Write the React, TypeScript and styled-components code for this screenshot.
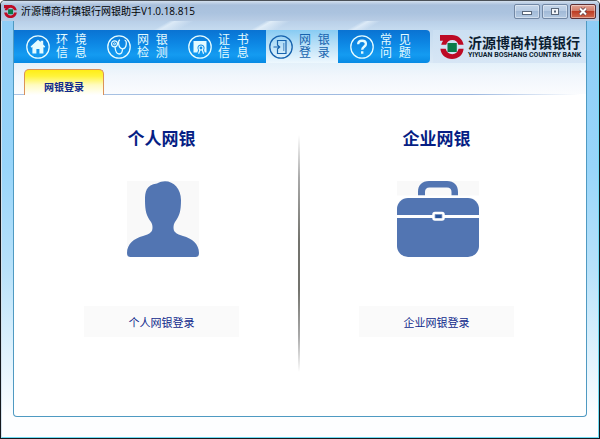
import React from "react";
import styled, { createGlobalStyle } from "styled-components";

const GlobalStyle = createGlobalStyle`
  * { box-sizing: border-box; }
  body {
    margin: 0;
    font-family: "Open Sans", "Noto Sans CJK SC", sans-serif;
    font-size: 11px;
    color: #10298c;
  }
  button { font: inherit; color: inherit; padding: 0; cursor: pointer; }
  svg { display: block; }
`;

const Window = styled.div`
  display: flex;
  flex-direction: column;
  min-height: 100vh;
  border: 1px solid #15191e;
  border-top-color: #4b5158;
  border-radius: 5px 5px 0 0;
  overflow: hidden;
`;

const TitleBar = styled.header`
  display: flex;
  align-items: center;
  height: 20px;
  padding: 0 3px;
  gap: 4px;
  background: linear-gradient(#d3e0ee 0, #a9c0dc 4px, #abc3df 12px, #b9cde5 100%);
`;

const AppTitle = styled.h1`
  flex: 1;
  margin: 0;
  font-size: 10px;
  line-height: 16px;
  font-weight: 400;
  color: #000;
  white-space: nowrap;
`;

const WindowControls = styled.div`
  display: flex;
  gap: 2px;
`;

const ControlButton = styled.button<{ $danger?: boolean }>`
  display: grid;
  place-items: center;
  width: 26px;
  height: 15px;
  border: 1px solid ${(p) => (p.$danger ? "#5b2f35" : "#7288a5")};
  border-radius: 2px;
  box-shadow: inset 0 0 0 1px rgba(255, 255, 255, 0.4);
  background: ${(p) =>
    p.$danger
      ? "linear-gradient(#e0a294 0, #d27c69 45%, #bd3d25 50%, #d06a50 100%)"
      : "linear-gradient(#c4d5e9 0, #b7cbe3 45%, #a2bad7 50%, #b4cae3 100%)"};
`;

const Frame = styled.div`
  flex: 1;
  display: flex;
  padding: 0 11px 20px;
  border: solid #6fdcf4;
  border-width: 0 1px 1px;
  border-left-color: #d5e3ee;
  background: linear-gradient(#8fcdf6 0, #98d5fa 35%, #b9e2fa 60%, #fdfeff 95%);
`;

const Panel = styled.main`
  flex: 1;
  display: flex;
  flex-direction: column;
  border: solid #4f9ac2;
  border-width: 0 1px 1px;
  border-radius: 0 0 4px 4px;
  background: #fff;
  overflow: hidden;
`;

const Banner = styled.div`
  display: flex;
  gap: 3px;
  padding-top: 9px;
  background:
    linear-gradient(150deg, transparent 24%, #dceaf7 25%, transparent 28%, transparent 39%, #e0edf8 40%, transparent 43%, transparent 54%, #dceaf7 55%, transparent 57%),
    linear-gradient(#b8cfe8 0, #c4daef 8px, #dbe9f6 100%);
`;

const NavBar = styled.nav`
  display: flex;
  gap: 9px;
  padding: 0 11px 0 9px;
  border-radius: 0 4px 4px 0;
  background: linear-gradient(#0a73d2 0, #0c84e2 35%, #149bf1 75%, #078ae4 100%);
`;

const NavButton = styled.button<{ $active?: boolean }>`
  display: flex;
  align-items: center;
  gap: 6px;
  width: 72px;
  height: 33px;
  padding: 0 3px;
  border: 0;
  font-family: "Liberation Sans", "Noto Sans CJK SC", sans-serif;
  font-size: 12px;
  line-height: 13px;
  white-space: pre;
  text-align: left;
  color: ${(p) => (p.$active ? "#1763ae" : "#e4fbff")};
  background: ${(p) => (p.$active ? "linear-gradient(#87cbf3 0, #b5def7 40%, #eef8fe 100%)" : "none")};
`;

const NavLabel = styled.span`
  display: flex;
  flex-direction: column;
`;

const Brand = styled.div`
  flex: 1;
  display: flex;
  align-items: center;
  gap: 4px;
  padding-left: 7px;
  background: linear-gradient(#cbdff2, #d7e6f5);
`;

const BrandText = styled.div`
  color: #0b1d30;
  white-space: nowrap;
`;

const BrandName = styled.div`
  font-size: 14px;
  line-height: 16px;
  font-weight: 700;
`;

const BrandLatin = styled.div`
  font: 700 7px/8px Roboto, sans-serif;
`;

const TabStrip = styled.div`
  display: flex;
  padding: 6px 0 0 10px;
  background: linear-gradient(90deg, #aac3e3 0, #9bb7df 80%, #fff 99%) bottom / 100% 1px no-repeat,
    linear-gradient(#e4f1fa 0, #f1f6fc 40%, #fbfcfe 100%);
`;

const Tab = styled.button`
  width: 80px;
  height: 26px;
  border: 1px solid #db9159;
  border-bottom: 0;
  border-radius: 5px 5px 0 0;
  padding-top: 9px;
  font-size: 10px;
  line-height: 16px;
  font-weight: 700;
  color: #10298c;
  background: linear-gradient(#ffed16 0, #fff43c 25%, #fffbc0 60%, #fff 100%);
`;

const Choices = styled.div`
  flex: 1;
  display: grid;
  grid-template-columns: 1fr 2px 1fr;
  padding: 32px 13px 44px 11px;
`;

const Choice = styled.section`
  display: flex;
  flex-direction: column;
  align-items: center;
`;

const ChoiceTitle = styled.h2`
  margin: 0;
  font-size: 17px;
  line-height: 24px;
  font-weight: 700;
  color: #061e84;
`;

const Picture = styled.div`
  margin: 30px 0 49px 3px;
  background: #f9f9f9;
`;

const LoginButton = styled.button`
  width: 155px;
  height: 31px;
  border: 0;
  background: #fafafa;
`;

const Divider = styled.div`
  margin-top: 8px;
  background: linear-gradient(#fff 0, #aaa 18%, #73736d 45%, #73736d 65%, #aaa 85%, #fff 100%);
`;

const BankMark = ({ size }: { size: number }) => (
  <svg width={size} height={size} viewBox="0 0 24 24" aria-hidden="true">
    <path
      fill="#bd0b25"
      d="M0 0h12C18 0 22.600 4 23.600 9.800h-5.200C17.600 6.800 15.400 5 12.400 5C9.200 5 7 6.800 6.200 9.800H1.200C1.500 8.300 2.200 7 3.100 5.800H0zM0.400 13.800h5.300C6.500 17.200 9 19.200 12.300 19.200c3.300 0 5.500-2 6.300-5.400h5C23 20 18.400 24 12 24S1 20 .4 13.800z"
    />
    <path fill="#087b49" d="M7.500 8h9.300v9H7.500z" />
  </svg>
);

const Ring = ({ children }: { children: React.ReactNode }) => (
  <svg width="24" height="24" viewBox="0 0 24 24" fill="none" stroke="currentColor" aria-hidden="true">
    <circle cx="12" cy="12" r="11.200" strokeWidth="1.300" />
    {children}
  </svg>
);

const HomeIcon = () => (
  <Ring>
    <path fill="currentColor" stroke="none" d="M12 4.800l2.600 2.300V5.800h2.600v3.600l2 2.200-1 1.100-.8-.6v6.500h-4v-4.700h-3v4.700h-4v-6.500l-.8.600-1-1.100z" />
  </Ring>
);

const StethoscopeIcon = () => (
  <Ring>
    <circle cx="7.500" cy="8.800" r="3" strokeWidth="1.200" />
    <circle cx="7.500" cy="8.800" r="1" />
    <path strokeWidth="1.300" d="M8 11.800C8.300 15.500 9.500 19 12.200 19c2.500 0 3.300-2.200 3.300-5.200M13 5c-2.200.5-2 8.500 2.500 8.800C20 13.500 20.200 5.800 17.600 5" />
  </Ring>
);

const CertificateIcon = () => (
  <Ring>
    <path fill="currentColor" stroke="none" d="M5.500 6h13v11.500h-1.700l-.7-2.600c1.400-2.500-.3-5.300-3.100-5.300-3 0-4.300 2.900-2.900 5.300l-.8 2.600H5.500z" />
    <circle cx="13" cy="13" r="2" strokeWidth="1.200" />
    <path strokeWidth="1.200" d="M12 15l-1.400 3.800M14.200 15l1.400 3.800" />
  </Ring>
);

const LoginIcon = () => (
  <Ring>
    <path strokeWidth="1.200" d="M8.500 10V5.500h8.500v13H8.500v-5M4.500 12h6M8.200 9.800l2.500 2.200-2.500 2.200" />
    <path strokeWidth=".7" d="M14.800 8v8" />
  </Ring>
);

const QuestionIcon = () => (
  <Ring>
    <path strokeWidth="2.400" d="M8.200 9.200C8.300 4.500 15.900 4.700 15.900 9c0 2.800-3.700 2.700-3.700 5.800M12.200 16.300v2.500" />
  </Ring>
);

const PersonPicture = () => (
  <svg width="72" height="76" viewBox="0 0 72 76" role="img" aria-label="个人">
    <path
      fill="#5275b2"
      d="M30 2.500C42-4 54 5 54 19c0 11-1.500 16-6 22-2 3-2 8 0 10 2 2.500 5 3 8 4 9 2.500 16 8 16 17 0 2.500-1 4-3.500 4h-65C1 76 0 74.500 0 72c0-9 7-14.500 16-17 3-1 6-1.500 8-4 2-2 2-7 0-10-4.500-6-6-11-6-22C18 11 19 4 30 2.500z"
    />
  </svg>
);

const BriefcasePicture = () => (
  <svg width="82" height="76" viewBox="0 0 82 76" role="img" aria-label="企业">
    <path fill="#5275b2" d="M21 14.500V11C21 4 25 0 32 0h18c7 0 11 4 11 11v3.500h-6.500V11c0-3-1.500-4.500-4.500-4.500H32.500c-3 0-4.500 1.500-4.500 4.500v3.500z" />
    <path fill="#fff" d="M0 14.500h82V76H0z" />
    <rect y="17" width="82" height="59" rx="11" fill="#5275b2" />
    <path stroke="#fff" strokeWidth="3" d="M0 35.500h82" />
    <rect x="36.500" y="32" width="10" height="6.500" rx="1.500" fill="#5275b2" stroke="#fff" strokeWidth="2.500" />
    <path fill="#28549b" d="M39 34h5v3h-5z" />
  </svg>
);

const navItems = [
  { top: "环  境", bottom: "信  息", Icon: HomeIcon },
  { top: "网  银", bottom: "检  测", Icon: StethoscopeIcon },
  { top: "证  书", bottom: "信  息", Icon: CertificateIcon },
  { top: "网  银", bottom: "登  录", Icon: LoginIcon, active: true },
  { top: "常  见", bottom: "问  题", Icon: QuestionIcon },
];

export default function App() {
  return (
    <>
      <GlobalStyle />
      <Window lang="zh-CN">
        <TitleBar>
          <BankMark size={13} />
          <AppTitle>沂源博商村镇银行网银助手V1.0.18.815</AppTitle>
          <WindowControls>
            <ControlButton aria-label="最小化">
              <svg width="12" height="9" viewBox="0 0 12 9">
                <rect x="1.500" y="4.500" width="9" height="3" fill="#fff" stroke="#59677a" />
              </svg>
            </ControlButton>
            <ControlButton aria-label="最大化">
              <svg width="10" height="9" viewBox="0 0 10 9">
                <rect x="1.500" y="1.500" width="7" height="6" fill="#f4f7fa" stroke="#59677a" />
                <path fill="#59677a" d="M4 3.500h2v2H4z" />
              </svg>
            </ControlButton>
            <ControlButton $danger aria-label="关闭">
              <svg width="12" height="9" viewBox="0 0 12 9">
                <path d="M3 1.500l6 6M9 1.500l-6 6" stroke="#64434a" strokeWidth="3.600" />
                <path d="M3 1.500l6 6M9 1.500l-6 6" stroke="#fff" strokeWidth="2" />
              </svg>
            </ControlButton>
          </WindowControls>
        </TitleBar>
        <Frame>
          <Panel>
            <Banner>
              <NavBar>
                {navItems.map(({ top, bottom, Icon, active }) => (
                  <NavButton key={top + bottom} $active={active} aria-current={active ? "page" : undefined}>
                    <Icon />
                    <NavLabel>
                      <span>{top}</span>
                      <span>{bottom}</span>
                    </NavLabel>
                  </NavButton>
                ))}
              </NavBar>
              <Brand>
                <BankMark size={24} />
                <BrandText>
                  <BrandName>沂源博商村镇银行</BrandName>
                  <BrandLatin>YIYUAN BOSHANG COUNTRY BANK</BrandLatin>
                </BrandText>
              </Brand>
            </Banner>
            <TabStrip role="tablist">
              <Tab role="tab" aria-selected="true">网银登录</Tab>
            </TabStrip>
            <Choices>
              <Choice>
                <ChoiceTitle>个人网银</ChoiceTitle>
                <Picture>
                  <PersonPicture />
                </Picture>
                <LoginButton>个人网银登录</LoginButton>
              </Choice>
              <Divider />
              <Choice>
                <ChoiceTitle>企业网银</ChoiceTitle>
                <Picture>
                  <BriefcasePicture />
                </Picture>
                <LoginButton>企业网银登录</LoginButton>
              </Choice>
            </Choices>
          </Panel>
        </Frame>
      </Window>
    </>
  );
}
